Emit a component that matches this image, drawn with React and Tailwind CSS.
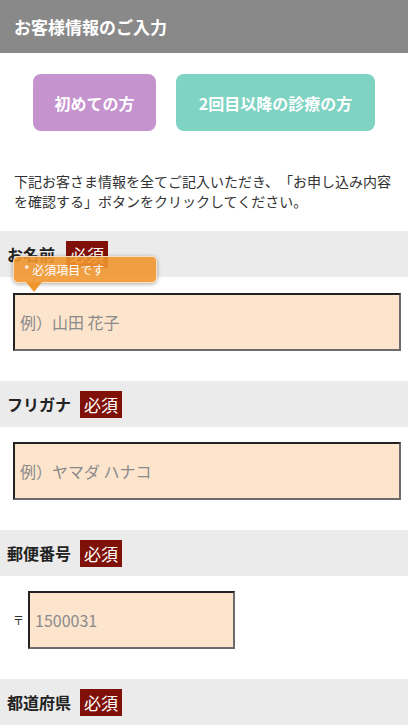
const font = { fontFamily: '"Noto Sans CJK JP", "Noto Sans", sans-serif' }

function Badge() {
  return (
    <span className="inline-flex items-center bg-[#7f1109] text-white text-[17px] leading-none px-[4px] h-[27px]">
      必須
    </span>
  )
}

function Section({ label, badgeGap = 'ml-[9px]' }) {
  return (
    <div className="bg-[#ebebeb] h-[46px] flex items-center px-[7px]">
      <span className="text-[16px] font-bold text-[#222]">{label}</span>
      <span className={badgeGap}>
        <Badge />
      </span>
    </div>
  )
}

function Field({ placeholder, className = '' }) {
  return (
    <div
      className={`h-[58px] bg-[#fde5cd] border-2 border-t-[#222] border-l-[#222] border-b-[#6b6b6b] border-r-[#6b6b6b] flex items-center px-[5px] text-[16px] text-[#8a8a8a] ${className}`}
    >
      {placeholder}
    </div>
  )
}

export default function App() {
  return (
    <div className="w-[408px] h-[725px] overflow-hidden bg-white [text-spacing-trim:space-all]" style={font}>
      <div className="h-[53px] bg-[#898989] flex items-center px-[14px]">
        <h1 className="text-white text-[17px] font-bold">お客様情報のご入力</h1>
      </div>

      <div className="flex justify-center gap-[20px] pt-[21px]">
        <button className="w-[123px] h-[57px] rounded-[8px] bg-[#c593cd] text-white text-[16px] font-bold">
          初めての方
        </button>
        <button className="w-[199px] h-[57px] rounded-[8px] bg-[#7fd3c3] text-white text-[16px] font-bold">
          2回目以降の診療の方
        </button>
      </div>

      <p className="px-[14px] pt-[40px] text-[14px] leading-[20px] text-[#333]">
        下記お客さま情報を全てご記入いただき、「お申し込み内容を確認する」ボタンをクリックしてください。
      </p>

      <div className="mt-[20px]">
        <Section label="お名前" badgeGap="ml-[11px]" />
        <div className="relative pl-[13px] pr-[7px] pt-[16px] pb-[30px]">
          <Field placeholder="例）山田 花子" />
          <div className="absolute left-[13px] top-[-21px] w-[144px] h-[27px] rounded-[5px] bg-[#f0962f]/90 border border-[#fbe0c0] shadow-[0_1px_4px_rgba(0,0,0,0.35)] flex items-center px-[10px] text-white text-[12px]">
            * 必須項目です
            <span className="absolute left-[12px] bottom-[-10px] w-0 h-0 border-l-[8px] border-r-[8px] border-t-[10px] border-l-transparent border-r-transparent border-t-[#f0962f]" />
          </div>
        </div>

        <Section label="フリガナ" />
        <div className="pl-[13px] pr-[7px] pt-[15px] pb-[30px]">
          <Field placeholder="例）ヤマダ ハナコ" />
        </div>

        <Section label="郵便番号" />
        <div className="pl-[13px] pr-[7px] pt-[15px] pb-[30px] flex items-center">
          <span className="text-[11px] text-[#333] mr-[4px]">〒</span>
          <Field placeholder="1500031" className="w-[207px]" />
        </div>

        <Section label="都道府県" />
      </div>
    </div>
  )
}
